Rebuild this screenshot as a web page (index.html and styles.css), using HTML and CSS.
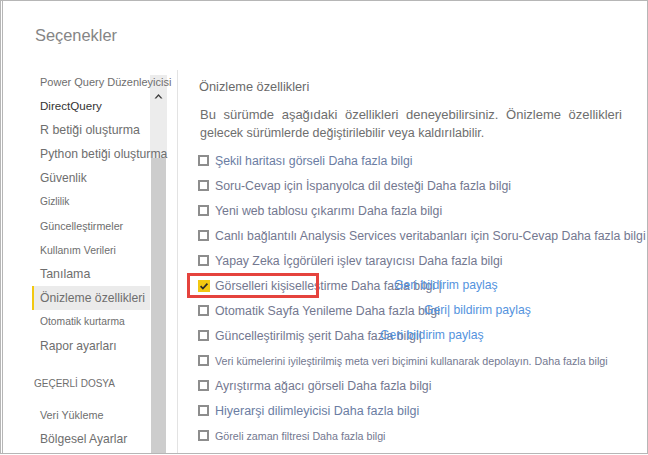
FILE: index.html
```html
<!DOCTYPE html>
<html lang="tr">
<head>
<meta charset="utf-8">
<title>Seçenekler</title>
<link rel="stylesheet" href="styles.css">
</head>
<body>
<div class="frame">
  <h1 class="title">Seçenekler</h1>
  <div class="panel">
    <nav class="sidebar">
      <ul class="nav">
        <li class="nav-item fs11">Power Query Düzenleyicisi</li>
        <li class="nav-item fs115 dark">DirectQuery</li>
        <li class="nav-item fs124">R betiği oluşturma</li>
        <li class="nav-item fs122">Python betiği oluşturma</li>
        <li class="nav-item fs12">Güvenlik</li>
        <li class="nav-item fs10">Gizlilik</li>
        <li class="nav-item fs107">Güncelleştirmeler</li>
        <li class="nav-item fs105">Kullanım Verileri</li>
        <li class="nav-item fs124">Tanılama</li>
        <li class="nav-item fs122 active">Önizleme özellikleri</li>
        <li class="nav-item fs103">Otomatik kurtarma</li>
        <li class="nav-item fs121">Rapor ayarları</li>
      </ul>
      <div class="section">GEÇERLİ DOSYA</div>
      <ul class="nav nav-file">
        <li class="nav-item fs108">Veri Yükleme</li>
        <li class="nav-item fs121">Bölgesel Ayarlar</li>
      </ul>
    </nav>
    <div class="scrollbar">
      <div class="track">
        <svg class="chevron" width="9" height="6" viewBox="0 0 9 6"><path d="M0.5 5.5 L4.5 1 L8.5 5.5 L6.8 5.5 L4.5 3 L2.2 5.5 Z" fill="#3c3c3c"/></svg>
      </div>
      <div class="thumb"></div>
    </div>
    <main class="content">
      <h2 class="heading">Önizleme özellikleri</h2>
      <p class="intro">
        <span class="intro-line wide">Bu sürümde aşağıdaki özellikleri deneyebilirsiniz. Önizleme özellikleri</span>
        <span class="intro-line">gelecek sürümlerde değiştirilebilir veya kaldırılabilir.</span>
      </p>
      <ul class="features">
        <li class="feature blue"><span class="box"></span><span class="label">Şekil haritası görseli Daha fazla bilgi</span></li>
        <li class="feature"><span class="box"></span><span class="label">Soru-Cevap için İspanyolca dil desteği Daha fazla bilgi</span></li>
        <li class="feature"><span class="box"></span><span class="label">Yeni web tablosu çıkarımı Daha fazla bilgi</span></li>
        <li class="feature"><span class="box"></span><span class="label">Canlı bağlantılı Analysis Services veritabanları için Soru-Cevap Daha fazla bilgi</span></li>
        <li class="feature"><span class="box"></span><span class="label">Yapay Zeka İçgörüleri işlev tarayıcısı Daha fazla bilgi</span></li>
        <li class="feature">
          <span class="box checked"><svg width="12" height="12" viewBox="0 0 12 12"><path d="M2.6 6.2 L4.9 8.6 L9.4 3.6" fill="none" stroke="#2a2a2a" stroke-width="1.7"/></svg></span>
          <span class="label">Görselleri kişiselleştirme Daha fazla bilgi |</span>
          <span class="overlay ov6">Geri bildirim paylaş</span>
          <span class="highlight"></span>
        </li>
        <li class="feature">
          <span class="box"></span><span class="label">Otomatik Sayfa Yenileme Daha fazla bilgi</span>
          <span class="overlay ov7">Geri| bildirim paylaş</span>
        </li>
        <li class="feature">
          <span class="box"></span><span class="label">Güncelleştirilmiş şerit Daha fazla bilgi|</span>
          <span class="overlay ov8">Geri bildirim paylaş</span>
        </li>
        <li class="feature small"><span class="box"></span><span class="label">Veri kümelerini iyileştirilmiş meta veri biçimini kullanarak depolayın. Daha fazla bilgi</span></li>
        <li class="feature"><span class="box"></span><span class="label">Ayrıştırma ağacı görseli Daha fazla bilgi</span></li>
        <li class="feature blue big"><span class="box"></span><span class="label">Hiyerarşi dilimleyicisi Daha fazla bilgi</span></li>
        <li class="feature small"><span class="box"></span><span class="label">Göreli zaman filtresi Daha fazla bilgi</span></li>
      </ul>
    </main>
  </div>
</div>
</body>
</html>
```
FILE: styles.css
```css
* {
  box-sizing: border-box;
  margin: 0;
  padding: 0;
}

body {
  margin: 0;
  background: #ffffff;
  font-family: "Liberation Sans", Arial, sans-serif;
}

ul {
  list-style: none;
}

.frame {
  width: 648px;
  height: 454px;
  border: 1px solid #b6b6b6;
  border-left: 3px double #b6b6b6;
  display: flex;
  flex-direction: column;
  overflow: hidden;
  background: #fff;
}

.title {
  height: 69px;
  flex: none;
  padding: 24px 0 0 32px;
  font-size: 16.4px;
  line-height: 20px;
  font-weight: normal;
  color: #858585;
}

.panel {
  flex: 1;
  display: flex;
  min-height: 0;
}

/* Sidebar */
.sidebar {
  width: 147px;
  flex: none;
  padding-left: 29px;
  position: relative;
  z-index: 1;
}

.nav-item {
  height: 24px;
  line-height: 24px;
  padding-left: 8px;
  color: #6e6e6e;
  white-space: nowrap;
}

.nav-item.dark {
  color: #333;
}

.nav-item.active {
  background: #ebebeb;
  border-left: 2px solid #f2c811;
  padding-left: 6px;
}

.fs10 { font-size: 10.2px; }
.fs103 { font-size: 10.3px; }
.fs105 { font-size: 10.5px; }
.fs107 { font-size: 10.7px; }
.fs108 { font-size: 10.8px; }
.fs11 { font-size: 11px; }
.fs115 { font-size: 11.6px; }
.fs12 { font-size: 12px; }
.fs121 { font-size: 12.1px; }
.fs122 { font-size: 12.2px; }
.fs124 { font-size: 12.4px; }

.section {
  margin-top: 14px;
  height: 24px;
  line-height: 24px;
  padding-left: 2px;
  font-size: 10px;
  color: #6e6e6e;
  white-space: nowrap;
}

.nav-file {
  margin-top: 7px;
}

/* Scrollbar */
.scrollbar {
  width: 17px;
  flex: none;
  margin-top: 5px;
  display: flex;
  flex-direction: column;
}

.track {
  height: 83px;
  flex: none;
  background: #ececec;
  display: flex;
  justify-content: center;
  padding-top: 18px;
}

.chevron {
  display: block;
}

.thumb {
  flex: 1;
  background: #cdcdcd;
  margin: 0 1px;
}

/* Main content */
.content {
  flex: 1;
  margin-left: 10px;
  border-left: 1px solid #e3e3e3;
  padding: 9px 0 0 20px;
  min-width: 0;
}

.heading {
  font-size: 12.8px;
  line-height: 16px;
  font-weight: normal;
  color: #6a6a6a;
  padding-left: 1px;
}

.intro {
  margin-top: 11px;
  width: 424px;
  padding-left: 2px;
  color: #6e6e6e;
}

.intro-line {
  display: block;
  font-size: 12.5px;
  line-height: 18px;
  white-space: nowrap;
}

.intro-line.wide {
  font-size: 13px;
  text-align: justify;
  text-align-last: justify;
  white-space: normal;
}

.features {
  margin-top: 6px;
}

.feature {
  position: relative;
  height: 25px;
  display: flex;
  align-items: center;
  font-size: 12.3px;
  color: #737890;
  white-space: nowrap;
}

.feature.blue {
  color: #6b7da3;
}

.feature.small {
  font-size: 10.7px;
}

.feature.big {
  font-size: 12.5px;
}

.box {
  width: 11px;
  height: 11px;
  border: 2px solid #8d8d8d;
  margin-right: 6px;
  flex: none;
}

.box.checked {
  width: 12px;
  height: 12px;
  border: none;
  background: #f2c811;
  margin-right: 5px;
}

.box.checked svg {
  display: block;
}

.overlay {
  position: absolute;
  top: 0;
  line-height: 25px;
  font-size: 12.2px;
  color: #5493de;
}

.ov6 { left: 196px; }
.ov7 { left: 226px; }
.ov8 { left: 182px; }

.highlight {
  position: absolute;
  left: -11px;
  top: 0;
  width: 132px;
  height: 25px;
  border: 3px solid #e5433d;
}
```
